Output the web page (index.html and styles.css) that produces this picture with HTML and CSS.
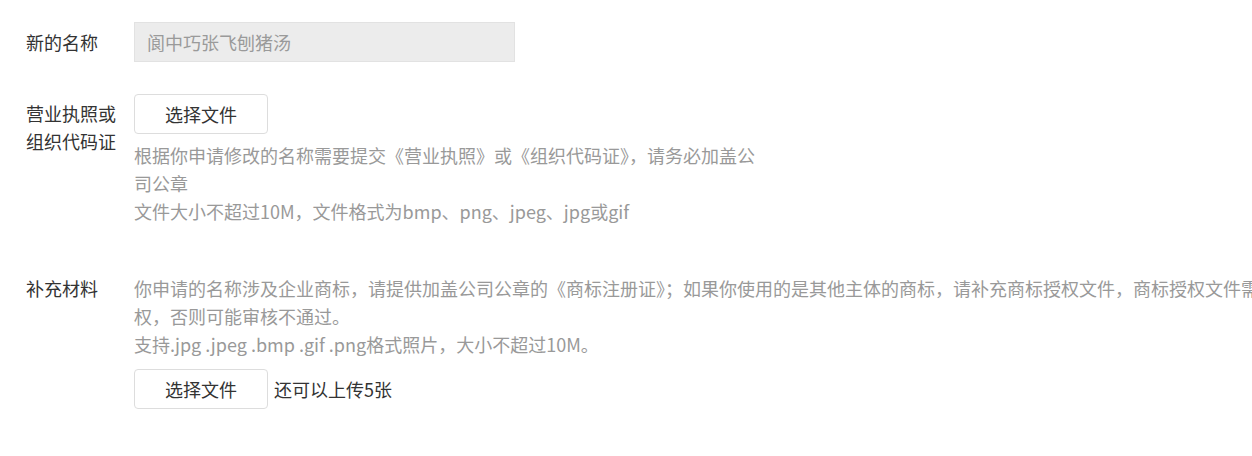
FILE: index.html
```html
<!DOCTYPE html>
<html lang="zh-CN">

<head>
    <meta charset="UTF-8">
    <meta name="viewport" content="width=device-width, initial-scale=1.0">
    <title>修改名称</title>
    <link rel="stylesheet" href="styles.css">
</head>

<body>
    <form class="rename-form">
        <div class="form__row form__row--name">
            <label class="form__label">新的名称</label>
            <input class="form__input" type="text" value="阆中巧张飞刨猪汤" disabled>
        </div>
        <div class="form__row">
            <label class="form__label form__label--offset">营业执照或<br>组织代码证</label>
            <div class="form__field">
                <button class="file-btn" type="button">选择文件</button>
                <div class="form__hint">
                    <p>根据你申请修改的名称需要提交《营业执照》或《组织代码证》，请务必加盖公司公章</p>
                    <p>文件大小不超过10M，文件格式为bmp、png、jpeg、jpg或gif</p>
                </div>
            </div>
        </div>
        <div class="form__row form__row--extra">
            <label class="form__label">补充材料</label>
            <div class="form__field">
                <div class="form__hint form__hint--wide">
                    <p>你申请的名称涉及企业商标，请提供加盖公司公章的《商标注册证》；如果你使用的是其他主体的商标，请补充商标授权文件，商标授权文件需加盖授权方公章并授权，否则可能审核不通过。</p>
                    <p>支持.jpg .jpeg .bmp .gif .png格式照片，大小不超过10M。</p>
                </div>
                <div class="upload">
                    <button class="file-btn" type="button">选择文件</button>
                    <span class="upload__left">还可以上传5张</span>
                </div>
            </div>
        </div>
    </form>
</body>

</html>
```

FILE: styles.css
```css
* {
  margin: 0;
  padding: 0;
  box-sizing: border-box;
}

html,
body {
  overflow: hidden;
}

body {
  width: 1252px;
  padding: 22px 0 0 26px;
  font-family: "Noto Sans CJK SC", "Noto Sans", sans-serif;
  font-size: 18px;
  color: #333333;
  background-color: #ffffff;
}

.form__row {
  display: flex;
  align-items: flex-start;
  margin-top: 32px;
}

.form__row--name {
  margin-top: 0;
  align-items: center;
}

.form__row--extra {
  margin-top: 49px;
}

.form__label {
  flex: 0 0 108px;
  line-height: 28px;
}

.form__label--offset {
  padding-top: 5px;
}

.form__input {
  width: 381px;
  height: 40px;
  padding: 0 12px;
  border: 1px solid #e2e2e2;
  background-color: #ececec;
  color: #9a9a9a;
  font-family: inherit;
  font-size: 18px;
  outline: none;
}

.form__field {
  display: flex;
  flex-direction: column;
  align-items: flex-start;
}

.file-btn {
  width: 134px;
  height: 40px;
  border: 1px solid #dddddd;
  border-radius: 4px;
  background-color: #ffffff;
  color: #333333;
  font-family: inherit;
  font-size: 18px;
  cursor: pointer;
}

.form__hint {
  width: 630px;
  margin-top: 7px;
  line-height: 28px;
  color: #999999;
}

.form__hint--wide {
  width: 1300px;
  margin-top: 0;
}

.upload {
  display: flex;
  align-items: center;
  gap: 6px;
  margin-top: 11px;
}

.upload__left {
  color: #333333;
}
```
